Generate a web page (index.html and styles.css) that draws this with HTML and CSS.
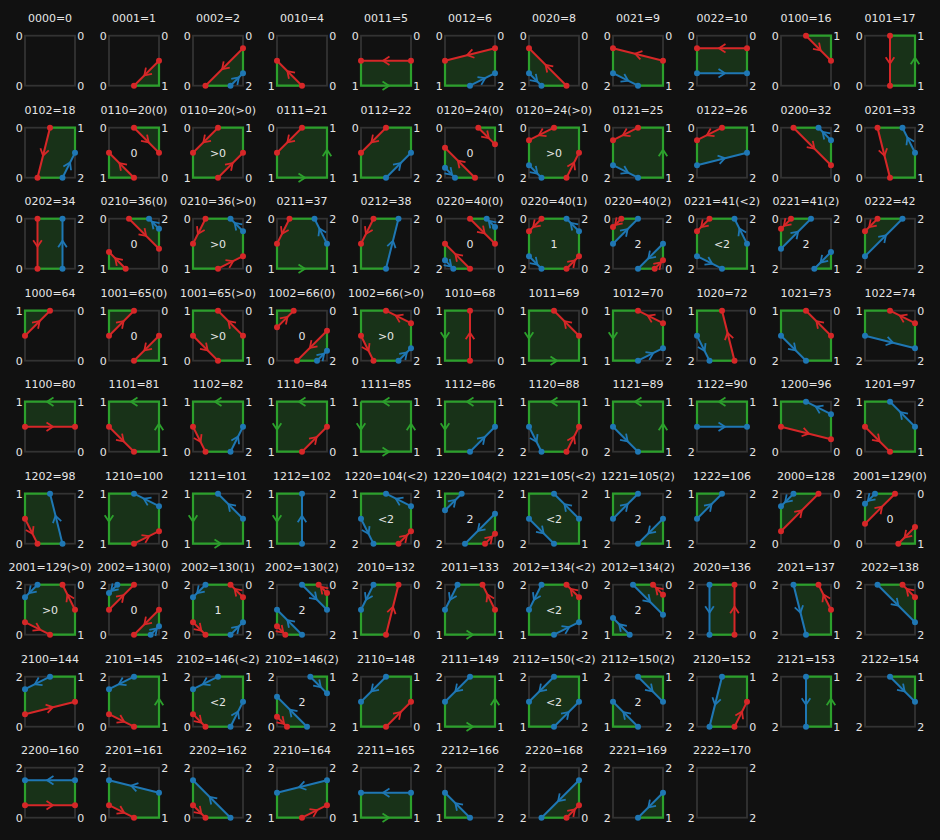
FILE: index.html
```html
<!DOCTYPE html>
<html lang="en">
<head>
<meta charset="utf-8">
<title>Isoband cases</title>
<link rel="stylesheet" href="styles.css">
</head>
<body>
<div class="grid" id="grid"></div>
<script src="script.js"></script>
</body>
</html>
```

FILE: styles.css
```css
html, body {
  margin: 0;
  padding: 0;
  background: #111111;
}
body {
  width: 940px;
  height: 840px;
  overflow: hidden;
  font-family: "DejaVu Sans", "Liberation Sans", sans-serif;
  color: #e6e6e6;
}
.grid {
  display: grid;
  grid-template-columns: repeat(11, 84px);
  grid-auto-rows: 91.5px;
  padding: 11px 0 0 8px;
}
.cell {
  display: flex;
  flex-direction: column;
  align-items: center;
}
.title {
  font-size: 11px;
  line-height: 16px;
  height: 16px;
  white-space: nowrap;
}
.tile {
  display: block;
  width: 84px;
  height: 75.5px;
  overflow: visible;
}
.tile text {
  font-family: "DejaVu Sans", "Liberation Sans", sans-serif;
  font-size: 11px;
  fill: #e6e6e6;
  text-anchor: middle;
}
.band { fill: #183218; stroke: none; }
.sq { fill: none; stroke: #333333; stroke-width: 1.8; }
.edge { fill: none; stroke: #2ca02c; stroke-width: 2.2; stroke-linejoin: miter; stroke-linecap: butt; }
.ln { stroke-width: 2; stroke-linecap: butt; }
.ln-r { stroke: #d62728; }
.ln-b { stroke: #1f77b4; }
.arr { fill: none; stroke-width: 1.8; stroke-linejoin: miter; stroke-linecap: butt; }
.arr-r { stroke: #d62728; }
.arr-b { stroke: #1f77b4; }
.arr-g { stroke: #2ca02c; }
.dot-r { fill: #d62728; }
.dot-b { fill: #1f77b4; }
```

FILE: script.js
```js
(function () {
  var S = 50, X0 = 17, Y0 = 8.7;
  var POS = [[X0, Y0], [X0 + S, Y0], [X0, Y0 + S], [X0 + S, Y0 + S]]; // TL TR BL BR
  var ORDER = [0, 2, 3, 1]; // counter-clockwise: TL -> BL -> BR -> TR
  var TH = [0.5, 1.5];
  function f(x) { return Math.round(x * 100) / 100; }
  function lvl(v) { return v < 0.5 ? 0 : (v > 1.5 ? 2 : 1); }
  function pts(list) { return list.map(function (p) { return f(p[0]) + ',' + f(p[1]); }).join(' '); }
  function esc(s) { return s.replace(/&/g, '&amp;').replace(/</g, '&lt;').replace(/>/g, '&gt;'); }

  function arrow(a, b, cls) {
    var dx = b[0] - a[0], dy = b[1] - a[1];
    var L = Math.sqrt(dx * dx + dy * dy) || 1;
    dx /= L; dy /= L;
    var nx = -dy, ny = dx;
    var mx = (a[0] + b[0]) / 2, my = (a[1] + b[1]) / 2;
    var tip = [mx + 3 * dx, my + 3 * dy];
    var w1 = [mx - 3.5 * dx + 4.3 * nx, my - 3.5 * dy + 4.3 * ny];
    var w2 = [mx - 3.5 * dx - 4.3 * nx, my - 3.5 * dy - 4.3 * ny];
    return '<polyline class="arr ' + cls + '" points="' + pts([w1, tip, w2]) + '"/>';
  }

  function saddle(d, t) {
    var a = d.map(function (x) { return x >= t; });
    return a[0] === a[3] && a[1] === a[2] && a[0] !== a[1];
  }

  function render(d, opt) {
    var v = d.slice();
    var c = null;
    if (opt !== null) {
      c = { '0': 0, '>0': 1, '1': 1, '2': 2, '<2': 1 }[opt];
      var sum = v.reduce(function (p, q) { return p + q; }, 0);
      if (c === 0 && sum / 4 > 0.5) {
        var n0 = v.filter(function (x) { return x === 0; }).length;
        var a0 = (2 - sum) / n0;
        v = v.map(function (x) { return x === 0 ? a0 : x; });
      }
      if (c === 2 && sum / 4 < 1.5) {
        var n2 = v.filter(function (x) { return x === 2; }).length;
        var sp = sum - 2 * n2;
        var b2 = (6 - sp) / n2;
        v = v.map(function (x) { return x === 2 ? b2 : x; });
      }
    }
    var nodes = [];
    var fullEdges = [];
    for (var k = 0; k < 4; k++) {
      var ia = ORDER[k], ib = ORDER[(k + 1) % 4];
      var va = v[ia], vb = v[ib];
      var pa = POS[ia], pb = POS[ib];
      nodes.push({ type: 'c', p: pa });
      var xs = [];
      for (var ti = 0; ti < 2; ti++) {
        var t = TH[ti];
        if ((va - t) * (vb - t) < 0) {
          var s = (t - va) / (vb - va);
          var up = va < t;
          var role = ti === 0 ? (up ? 'Q' : 'P') : (up ? 'P' : 'Q');
          xs.push({ type: 'x', t: ti, s: s, role: role,
            p: [pa[0] + s * (pb[0] - pa[0]), pa[1] + s * (pb[1] - pa[1])] });
        }
      }
      xs.sort(function (m, n) { return m.s - n.s; });
      xs.forEach(function (x) { nodes.push(x); });
      if (lvl(va) === 1 && lvl(vb) === 1) fullEdges.push([pa, pb]);
    }
    var N = nodes.length;
    var partner = {};
    var segs = [];
    for (var tt = 0; tt < 2; tt++) {
      var idx = [];
      nodes.forEach(function (n, i) { if (n.type === 'x' && n.t === tt) idx.push(i); });
      if (idx.length === 2) {
        var P = nodes[idx[0]].role === 'P' ? idx[0] : idx[1];
        var Q = P === idx[0] ? idx[1] : idx[0];
        partner[P] = Q;
        segs.push([P, Q, tt]);
      } else if (idx.length === 4) {
        var bandSide = tt === 0 ? (c > 0.5) : (c < 1.5);
        for (var m = 0; m < 4; m++) {
          if (nodes[idx[m]].role !== 'P') continue;
          var q = bandSide ? idx[(m + 1) % 4] : idx[(m + 3) % 4];
          partner[idx[m]] = q;
          segs.push([idx[m], q, tt]);
        }
      }
    }
    var polys = [], arcs = [];
    var anyX = nodes.some(function (n) { return n.type === 'x'; });
    if (!anyX) {
      if (d.every(function (x) { return x === 1; })) {
        var sq = [POS[0], POS[2], POS[3], POS[1]];
        polys.push(sq);
        arcs.push([POS[0], POS[2], POS[3], POS[1], POS[0]]);
      }
    } else {
      var used = {};
      for (var qi = 0; qi < N; qi++) {
        if (nodes[qi].type !== 'x' || nodes[qi].role !== 'Q' || used[qi]) continue;
        var poly = [];
        var i = qi, guard = 0;
        while (guard++ < 20) {
          used[i] = true;
          poly.push(nodes[i].p);
          var arc = [nodes[i].p];
          var j = i, g2 = 0;
          do {
            j = (j + 1) % N;
            poly.push(nodes[j].p);
            arc.push(nodes[j].p);
          } while (nodes[j].type !== 'x' && g2++ < 20);
          arcs.push(arc);
          i = partner[j];
          if (i === undefined || i === qi) break;
        }
        polys.push(poly);
      }
    }
    var out = [];
    polys.forEach(function (p) { out.push('<polygon class="band" points="' + pts(p) + '"/>'); });
    out.push('<rect class="sq" x="' + X0 + '" y="' + Y0 + '" width="' + S + '" height="' + S + '"/>');
    arcs.forEach(function (a) { out.push('<polyline class="edge" points="' + pts(a) + '"/>'); });
    fullEdges.forEach(function (e) { out.push(arrow(e[0], e[1], 'arr-g')); });
    segs.forEach(function (sg) {
      var a = nodes[sg[0]].p, b = nodes[sg[1]].p;
      var col = sg[2] === 0 ? 'r' : 'b';
      out.push('<line class="ln ln-' + col + '" x1="' + f(a[0]) + '" y1="' + f(a[1]) + '" x2="' + f(b[0]) + '" y2="' + f(b[1]) + '"/>');
      out.push(arrow(a, b, 'arr-' + col));
    });
    nodes.forEach(function (n) {
      if (n.type === 'x') {
        out.push('<circle class="dot-' + (n.t === 0 ? 'r' : 'b') + '" cx="' + f(n.p[0]) + '" cy="' + f(n.p[1]) + '" r="3"/>');
      }
    });
    var off = 5.7, base = 4;
    out.push('<text x="' + f(X0 - off) + '" y="' + f(Y0 + base) + '">' + d[0] + '</text>');
    out.push('<text x="' + f(X0 + S + off) + '" y="' + f(Y0 + base) + '">' + d[1] + '</text>');
    out.push('<text x="' + f(X0 - off) + '" y="' + f(Y0 + S + base) + '">' + d[2] + '</text>');
    out.push('<text x="' + f(X0 + S + off) + '" y="' + f(Y0 + S + base) + '">' + d[3] + '</text>');
    if (opt !== null) {
      out.push('<text x="' + f(X0 + S / 2) + '" y="' + f(Y0 + S / 2 + base) + '">' + esc(opt) + '</text>');
    }
    var value = d[0] * 64 + d[1] * 16 + d[2] * 4 + d[3];
    var title = d.join('') + '=' + value + (opt !== null ? '(' + opt + ')' : '');
    return '<div class="cell"><div class="title">' + esc(title) + '</div>' +
      '<svg class="tile" viewBox="0 0 84 75.5" width="84" height="75.5" xmlns="http://www.w3.org/2000/svg">' +
      out.join('') + '</svg></div>';
  }

  var html = [];
  for (var a = 0; a < 3; a++) for (var b = 0; b < 3; b++) for (var cc = 0; cc < 3; cc++) for (var e = 0; e < 3; e++) {
    var d = [a, b, cc, e];
    var rs = saddle(d, 1), bs = saddle(d, 2);
    var opts;
    if (rs && bs) opts = ['0', '1', '2'];
    else if (rs) opts = ['0', '>0'];
    else if (bs) opts = ['<2', '2'];
    else opts = [null];
    opts.forEach(function (o) { html.push(render(d, o)); });
  }
  document.getElementById('grid').innerHTML = html.join('');
})();
```
